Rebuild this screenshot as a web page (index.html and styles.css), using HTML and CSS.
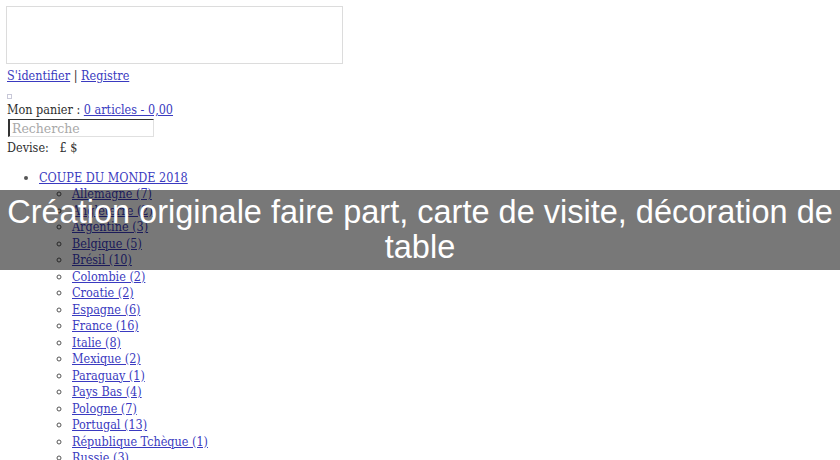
FILE: index.html
```html
<!DOCTYPE html>
<html lang="fr">

<head>
	<meta charset="UTF-8">
	<meta name="viewport" content="width=device-width, initial-scale=1.0">
	<title>Création originale faire part, carte de visite, décoration de table</title>
	<link rel="stylesheet" href="styles.css">
</head>

<body>
	<div id="page">
		<div class="logo-box"></div>

		<div class="account">
			<a href="#">S'identifier</a> | <a href="#">Registre</a>
		</div>

		<ul class="cart-list">
			<li></li>
		</ul>

		<div class="cart">Mon panier : <a href="#">0 articles - 0,00 </a></div>

		<input class="search" type="text" placeholder="Recherche">

		<div class="currency">Devise: &nbsp; £ $</div>

		<ul class="menu">
			<li>
				<a href="#">COUPE DU MONDE 2018</a>
				<ul class="submenu">
					<li><a href="#">Allemagne (7)</a></li>
					<li><a href="#">Angleterre (2)</a></li>
					<li><a href="#">Argentine (3)</a></li>
					<li><a href="#">Belgique (5)</a></li>
					<li><a href="#">Brésil (10)</a></li>
					<li><a href="#">Colombie (2)</a></li>
					<li><a href="#">Croatie (2)</a></li>
					<li><a href="#">Espagne (6)</a></li>
					<li><a href="#">France (16)</a></li>
					<li><a href="#">Italie (8)</a></li>
					<li><a href="#">Mexique (2)</a></li>
					<li><a href="#">Paraguay (1)</a></li>
					<li><a href="#">Pays Bas (4)</a></li>
					<li><a href="#">Pologne (7)</a></li>
					<li><a href="#">Portugal (13)</a></li>
					<li><a href="#">République Tchèque (1)</a></li>
					<li><a href="#">Russie (3)</a></li>
					<li><a href="#">Suisse (2)</a></li>
				</ul>
			</li>
		</ul>
	</div>

	<div class="title-band">
		<h1>Création originale faire part, carte de visite, décoration de table</h1>
	</div>
</body>

</html>
```

FILE: styles.css
```css
body {
	margin: 0;
	font-family: 'DejaVu Serif', serif;
	font-stretch: condensed;
	font-size: 12.5px;
	line-height: 16.5px;
	color: #2e2e2e;
	background: #fff;
	overflow: hidden;
}

a {
	color: #3a3ac0;
}

#page {
	padding: 6px 0 0 7px;
}

.logo-box {
	width: 335px;
	height: 56px;
	margin-left: -1px;
	border: 1px solid #dcdcdc;
}

.account {
	margin-top: 4px;
}

.cart-list {
	margin: 2px 0 0;
	padding: 0;
	list-style: none;
}

.cart-list li {
	width: 3px;
	height: 3px;
	margin: 9px 0 3px;
	border: 1px solid #c8c8d8;
}

.search {
	display: block;
	width: 139px;
	height: 16px;
	margin: 1px 0 0 1px;
	padding: 0 2px;
	border: 1px solid #e0e0e0;
	border-top-color: #333;
	border-left: 2px solid #333;
	font-family: inherit;
	font-size: 12.5px;
	color: #333;
}

.search::placeholder {
	color: #a8a8a8;
}

.currency {
	margin-top: 3px;
}

.menu {
	margin: 13px 0 0;
	padding-left: 32px;
	list-style: disc;
}

.submenu {
	margin: 0;
	padding-left: 33px;
	list-style: circle;
}

.menu li::marker {
	color: #555;
}

.title-band {
	position: absolute;
	top: 190px;
	left: 0;
	right: 0;
	height: 80px;
	background: rgba(0, 0, 0, 0.53);
}

.title-band h1 {
	margin: 0;
	padding: 5px 0 0;
	font-family: 'Liberation Sans', Arial, sans-serif;
	font-stretch: normal;
	font-size: 32.5px;
	font-weight: normal;
	line-height: 35px;
	text-align: center;
	color: #fff;
}
```
